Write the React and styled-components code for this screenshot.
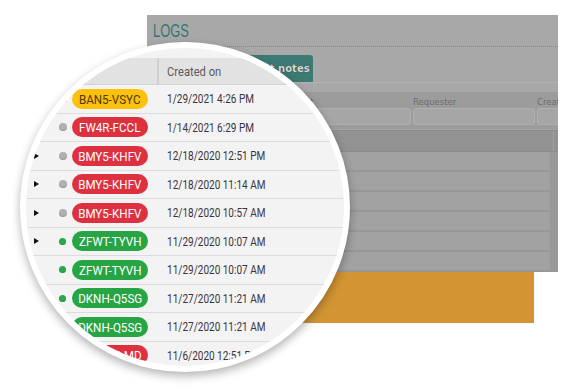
import styled, { createGlobalStyle } from "styled-components";

const GlobalStyle = createGlobalStyle`
  html, body {
    margin: 0;
    padding: 0;
    background: #ffffff;
  }
  body {
    width: 570px;
    height: 390px;
    overflow: hidden;
    font-family: "Liberation Sans", Arial, sans-serif;
  }
`;

const rows = [
  { code: "BAN5-VSYC", tone: "yellow", dot: "gray", date: "1/29/2021 4:26 PM" },
  { code: "FW4R-FCCL", tone: "red", dot: "gray", date: "1/14/2021 6:29 PM" },
  { code: "BMY5-KHFV", tone: "red", dot: "gray", date: "12/18/2020 12:51 PM" },
  { code: "BMY5-KHFV", tone: "red", dot: "gray", date: "12/18/2020 11:14 AM" },
  { code: "BMY5-KHFV", tone: "red", dot: "gray", date: "12/18/2020 10:57 AM" },
  { code: "ZFWT-TYVH", tone: "green", dot: "green", date: "11/29/2020 10:07 AM" },
  { code: "ZFWT-TYVH", tone: "green", dot: "green", date: "11/29/2020 10:07 AM" },
  { code: "DKNH-Q5SG", tone: "green", dot: "green", date: "11/27/2020 11:21 AM" },
  { code: "DKNH-Q5SG", tone: "green", dot: "green", date: "11/27/2020 11:21 AM" },
  { code: "HKRT-PLMD", tone: "red", dot: "gray", date: "11/6/2020 12:51 PM" },
];

// only the columns that peek out from behind the lens
const filters = ["Client", "Requester", "Created on"];

function App() {
  return (
    <Stage>
      <GlobalStyle />
      <Screen>
        <TitleBar>
          <Squeeze $x={0.68}>LOGS</Squeeze>
        </TitleBar>
        <TabBar>
          <Tab>Request notes</Tab>
        </TabBar>
        <Filters>
          {filters.map((f) => (
            <Filter key={f}>
              <FilterLabel>{f}</FilterLabel>
              <FilterInput />
            </Filter>
          ))}
        </Filters>
        <GridHead />
        <GridBody>
          <GridRows>
            {[0, 1, 2, 3, 4, 5].map((i) => (
              <GridRow key={i} />
            ))}
          </GridRows>
          <Scrollbar />
        </GridBody>
      </Screen>
      <Banner />

      <Lens>
        <LensTable>
          <HeadRow>
            <HeadCell />
            <HeadCell $last>
              <Squeeze $x={0.86}>Created on</Squeeze>
            </HeadCell>
          </HeadRow>
          {rows.map((r, i) => (
            <Row key={i}>
              <Caret />
              <Dot $tone={r.dot} />
              <Badge $tone={r.tone}>
                <Squeeze $x={0.86} $center>
                  {r.code}
                </Squeeze>
              </Badge>
              <DateCell>
                <Squeeze $x={0.77}>{r.date}</Squeeze>
              </DateCell>
            </Row>
          ))}
        </LensTable>
      </Lens>
    </Stage>
  );
}

const Stage = styled.div`
  position: relative;
  width: 570px;
  height: 390px;
  padding: 15px 0 0 147px;
  box-sizing: border-box;
`;

const Squeeze = styled.span`
  display: inline-block;
  white-space: nowrap;
  transform: scaleX(${(p) => p.$x});
  transform-origin: ${(p) => (p.$center ? "center" : "left")} center;
`;

const Screen = styled.div`
  width: 411px;
  background: #a8a8a8;
  overflow: hidden;
`;

const TitleBar = styled.div`
  height: 31px;
  margin-left: 6px;
  display: flex;
  align-items: center;
  font-family: "Liberation Sans", Arial, sans-serif;
  font-size: 19px;
  color: #327673;
  border-bottom: 1px dotted #868686;
`;

const TabBar = styled.div`
  height: 36px;
  display: flex;
  align-items: flex-end;
  padding-left: 78px;
  border-bottom: 1px solid #b3b3b3;
  box-sizing: border-box;
`;

const Tab = styled.div`
  height: 27px;
  width: 88px;
  display: flex;
  align-items: center;
  justify-content: center;
  background: #3c7a74;
  border-radius: 3px 3px 0 0;
  font-family: "DejaVu Sans", sans-serif;
  font-size: 10px;
  font-weight: bold;
  color: #d8d8d8;
  text-shadow: 0 0 1px #222;
`;

const Filters = styled.div`
  margin-top: 9px;
  background: #9c9c9c;
  padding: 4px 0 4px 142px;
  display: grid;
  grid-template-columns: repeat(3, 122px);
  column-gap: 2px;
`;

const Filter = styled.div`
  display: flex;
  flex-direction: column;
`;

const FilterLabel = styled.div`
  font-family: "DejaVu Sans", sans-serif;
  font-size: 8.5px;
  line-height: 12px;
  color: #6c6c6c;
  white-space: nowrap;
`;

const FilterInput = styled.div`
  height: 15px;
  background: #a6a6a6;
  border: 1px solid #b0b0b0;
  border-radius: 3px;
`;

const GridHead = styled.div`
  height: 20px;
  margin-top: 1px;
  background: #939393;
  border-top: 1px solid #8b8b8b;
  border-bottom: 1px solid #8b8b8b;
  display: flex;
  justify-content: flex-end;
  padding-right: 4px;

  &::after {
    content: "";
    width: 1px;
    background: #a2a2a2;
  }
`;

const GridBody = styled.div`
  display: flex;
  height: 120px;
`;

const GridRows = styled.div`
  flex: 1;
  display: flex;
  flex-direction: column;
`;

const GridRow = styled.div`
  height: 21.3px;
  box-sizing: border-box;
  background: #a2a2a2;
  border-bottom: 2px solid #979797;
`;

const Scrollbar = styled.div`
  width: 8px;
  background: #989898;
`;

const Banner = styled.div`
  width: 387px;
  height: 51px;
  background: #d39533;
`;

const Lens = styled.div`
  position: absolute;
  left: 20px;
  top: 42px;
  width: 330px;
  height: 330px;
  box-sizing: border-box;
  border: 6px solid #ffffff;
  border-radius: 50%;
  overflow: hidden;
  background: #f3f3f3;
  box-shadow: 0 4px 10px rgba(0, 0, 0, 0.3);
`;

const LensTable = styled.div`
  padding-top: 10px;
  font-family: "Roboto", "Open Sans", sans-serif;
  font-size: 13px;
`;

const HeadRow = styled.div`
  height: 27px;
  display: flex;
  background: #e2e2e2;
  border-bottom: 1px solid #d4d4d4;
  box-sizing: border-box;
`;

const HeadCell = styled.div`
  ${(p) => (p.$last ? "flex: 1;" : "width: 133px; border-right: 2px solid #d0d0d0;")}
  box-sizing: border-box;
  display: flex;
  align-items: center;
  padding-left: 8px;
  color: #5a5a5a;
`;

const Row = styled.div`
  height: 28.5px;
  box-sizing: border-box;
  display: grid;
  grid-template-columns: 25px 13px 87px 1fr;
  align-items: center;
  padding-left: 8px;
  border-bottom: 1.5px solid #dcdcdc;
`;

const Caret = styled.div`
  width: 0;
  height: 0;
  border-top: 3.5px solid transparent;
  border-bottom: 3.5px solid transparent;
  border-left: 5px solid #111111;
`;

const dotColors = {
  gray: "#b0b0b0",
  green: "#2aa84a",
};

const Dot = styled.div`
  width: ${(p) => (p.$tone === "green" ? 7 : 8)}px;
  height: ${(p) => (p.$tone === "green" ? 7 : 8)}px;
  border-radius: 50%;
  background: ${(p) => dotColors[p.$tone]};
  box-shadow: inset 0 -1px 1px rgba(0, 0, 0, 0.15);
`;

const badgeColors = {
  yellow: { bg: "#fdc10d", fg: "#4a3a05" },
  red: { bg: "#dd3140", fg: "#ffffff" },
  green: { bg: "#27a544", fg: "#ffffff" },
};

const Badge = styled.div`
  width: 76px;
  height: 20px;
  border-radius: 10px;
  display: flex;
  align-items: center;
  justify-content: center;
  background: ${(p) => badgeColors[p.$tone].bg};
  color: ${(p) => badgeColors[p.$tone].fg};
  font-size: 13.5px;
  overflow: hidden;
`;

const DateCell = styled.div`
  padding-left: 8px;
  color: #3a3340;
  white-space: nowrap;
`;

export default App;
